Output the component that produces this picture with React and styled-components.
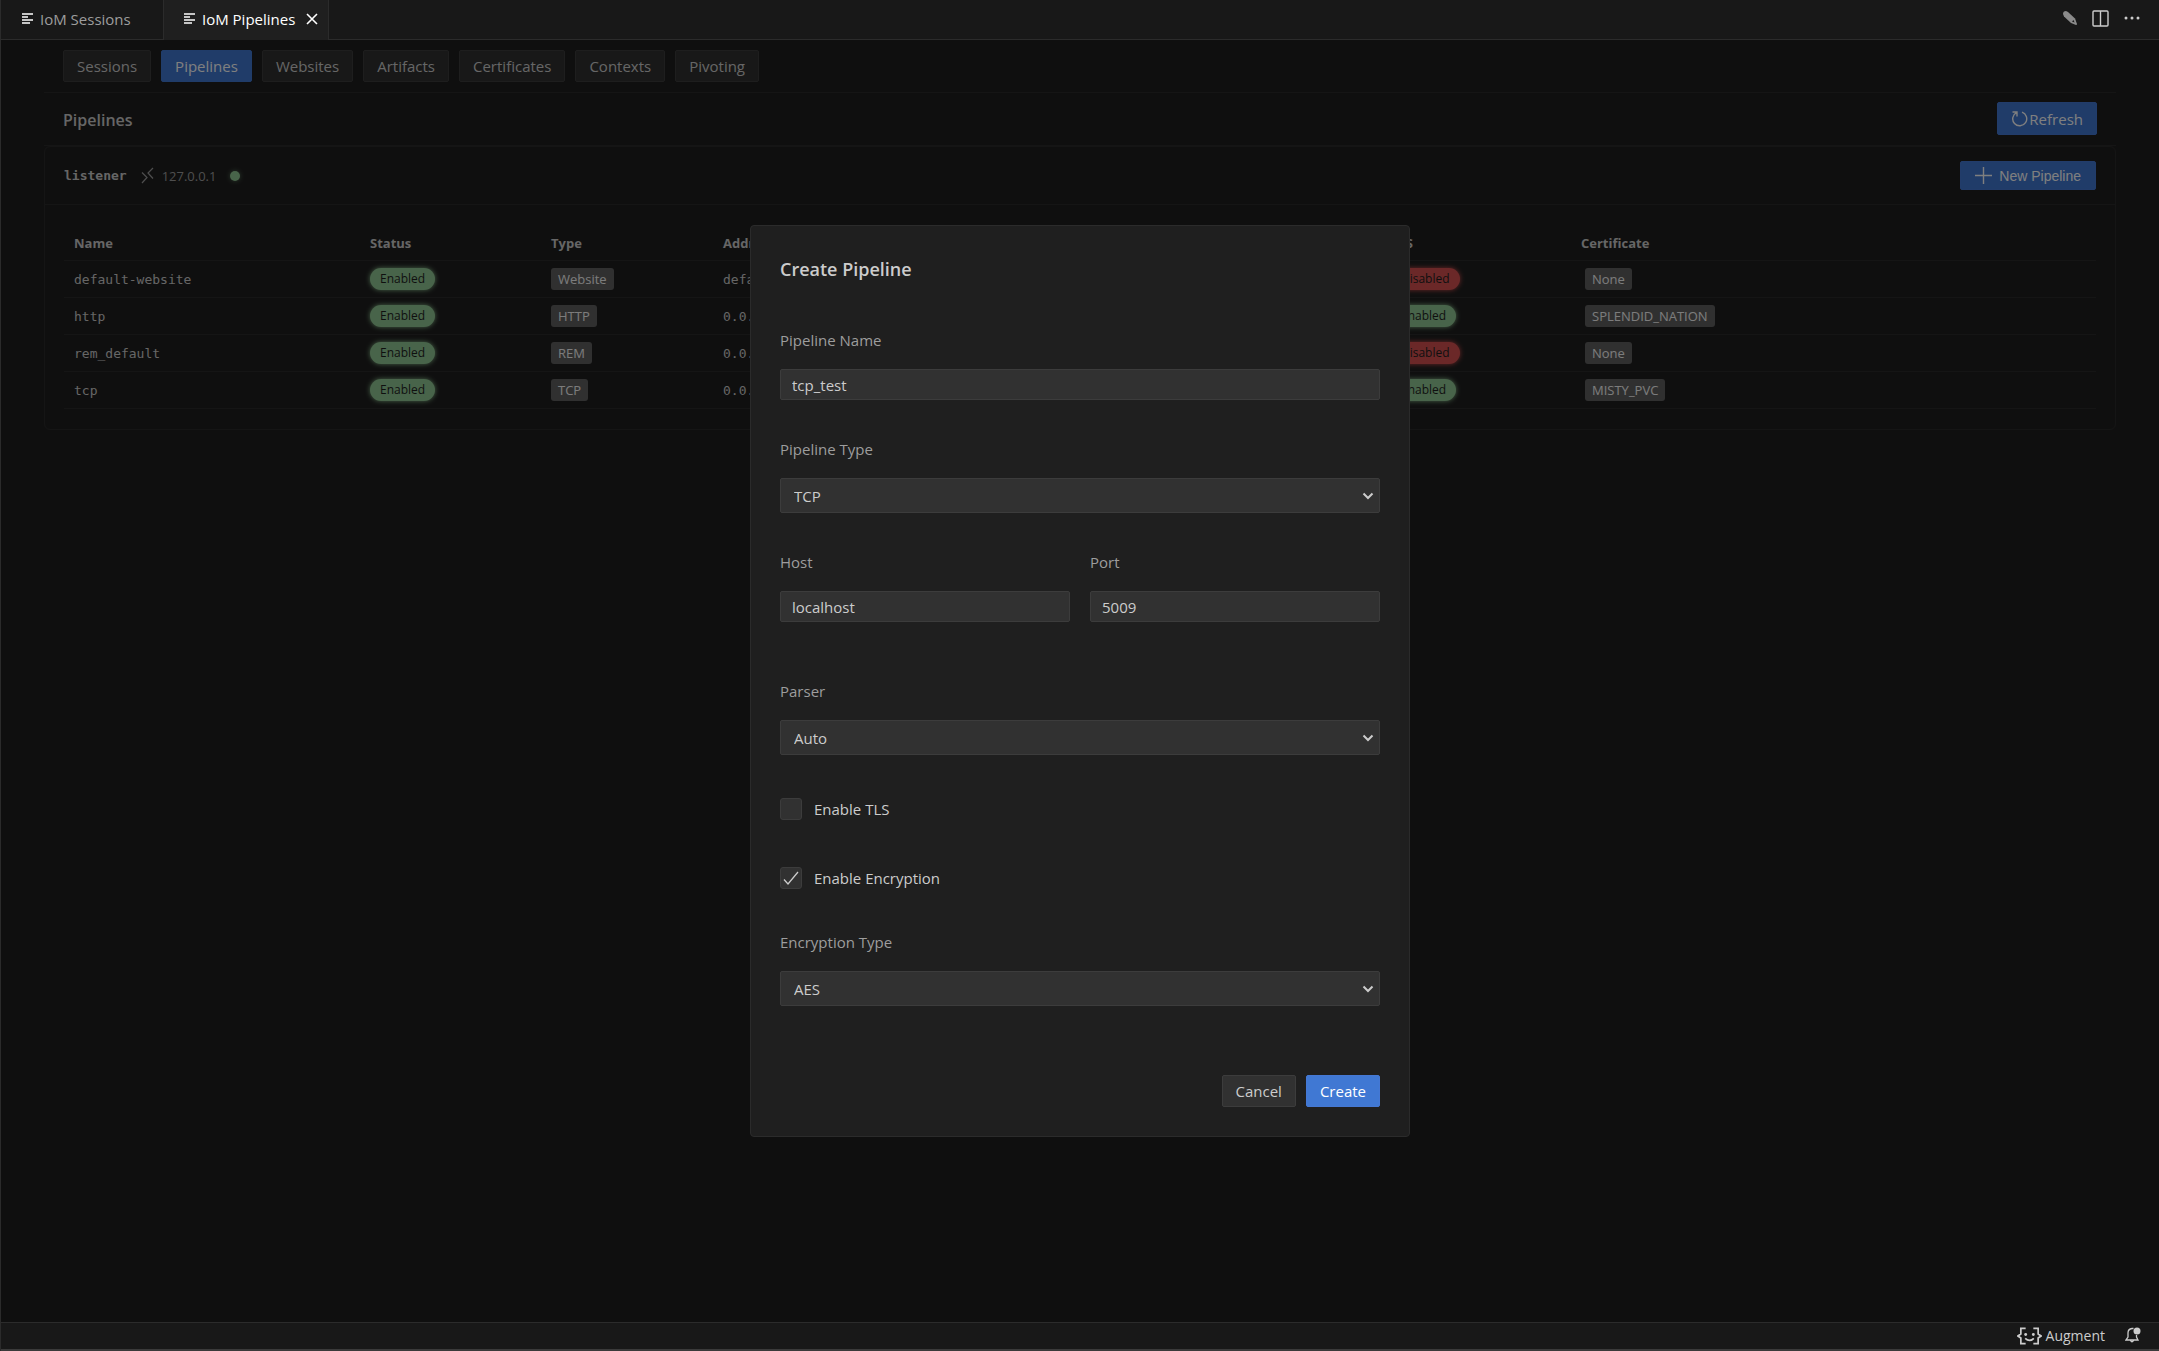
import React, { useState } from "react";
import styled, { createGlobalStyle } from "styled-components";

const SANS = '"Open Sans", "Noto Sans", sans-serif';
const MONO = '"DejaVu Sans Mono", "Liberation Mono", monospace';

const GlobalStyle = createGlobalStyle`
  *, *::before, *::after { box-sizing: border-box; }
  html, body, #root { height: 100%; }
  body {
    margin: 0;
    background: #1f1f1f;
    color: #cccccc;
    font-family: ${SANS};
    font-size: 15px;
    line-height: 20px;
  }
  button, input, select { font: inherit; color: inherit; margin: 0; }
`;

const Window = styled.div`
  display: flex;
  flex-direction: column;
  height: 100%;
  border-left: 1px solid #2b2b2b;
`;

/* Editor tabs */
const TabBar = styled.header`
  display: flex;
  justify-content: space-between;
  flex: none;
  height: 40px;
  background: #181818;
  box-shadow: inset 0 -1px 0 #2b2b2b;
`;

const Tabs = styled.div`
  display: flex;
`;

const Tab = styled.div`
  display: flex;
  align-items: center;
  gap: 7px;
  width: ${(p) => (p.$active ? 166 : 162)}px;
  padding: 0 10px 2px ${(p) => (p.$active ? 20 : 21)}px;
  color: ${(p) => (p.$active ? "#ffffff" : "#9d9d9d")};
  background: ${(p) => (p.$active ? "#1f1f1f" : "transparent")};
  border-left: ${(p) => (p.$active ? "1px solid #2b2b2b" : "0")};
  border-right: ${(p) => (p.$active ? "1px solid #2b2b2b" : "0")};
  white-space: nowrap;
`;

const IconButton = styled.button`
  display: inline-flex;
  align-items: center;
  justify-content: center;
  padding: 0;
  border: 0;
  background: none;
  color: ${(p) => p.$color || "#cccccc"};
`;

const CloseButton = styled(IconButton)`
  margin-left: auto;
`;

const TabActions = styled.div`
  display: flex;
  align-items: center;
  gap: 14px;
  padding: 0 18px 4px 0;
`;

/* Webview */
const Webview = styled.div`
  position: relative;
  flex: 1;
  min-height: 0;
  overflow: hidden;
`;

const Page = styled.main`
  padding: 0 43px;
`;

const Nav = styled.nav`
  display: flex;
  gap: 10px;
  padding: 10px 19px;
  border-bottom: 1px solid #2b2b2b;
`;

const Button = styled.button`
  display: inline-flex;
  align-items: center;
  justify-content: center;
  height: 32px;
  padding: 0 13px;
  border: 1px solid ${(p) => (p.$primary ? "#4578d4" : "#3c3c3c")};
  border-radius: 2px;
  background: ${(p) => (p.$primary ? "#4078d3" : "#313131")};
  color: ${(p) => (p.$primary ? "#ffffff" : "#cccccc")};
  white-space: nowrap;
`;

const NavButton = styled(Button)`
  border-color: ${(p) => (p.$primary ? "#4078d3" : "#3c3c3c")};
`;

const HeaderRow = styled.div`
  display: flex;
  align-items: center;
  justify-content: space-between;
  padding: 9px 19px 10px;
  border-bottom: 1px solid #2b2b2b;
`;

const PageTitle = styled.h1`
  margin: 0;
  padding-top: 2px;
  font-size: 16px;
  font-weight: 600;
  line-height: 24px;
`;

const RefreshButton = styled(Button)`
  height: 33px;
  gap: 1px;
`;

const Card = styled.section`
  border: 1px solid #2b2b2b;
  border-radius: 6px;
`;

const CardHeader = styled.div`
  display: flex;
  align-items: center;
  justify-content: space-between;
  padding: 14px 19px;
  border-bottom: 1px solid #2b2b2b;
`;

const Listener = styled.div`
  display: flex;
  align-items: center;
  gap: 14px;
`;

const ListenerName = styled.span`
  font: 700 13px/20px ${MONO};
`;

const Address = styled.span`
  display: inline-flex;
  align-items: center;
  gap: 8px;
  font-size: 13px;
  color: #9d9d9d;
`;

const Dot = styled.span`
  width: 10px;
  height: 10px;
  border-radius: 50%;
  background: #91c894;
  box-shadow: 0 0 5px #91c89480;
`;

const NewButton = styled(Button)`
  height: 29px;
  gap: 7px;
  padding: 0 14px;
  font: 14px/20px "Liberation Sans", Arial, sans-serif;
`;

const TableWrap = styled.div`
  padding: 20px 19px;
`;

const Table = styled.table`
  width: 100%;
  table-layout: fixed;
  border-collapse: collapse;
`;

const Col = styled.col`
  width: ${(p) => (p.$w ? p.$w + "px" : "auto")};
`;

const Th = styled.th`
  height: 35px;
  padding: 2px 10px 0;
  text-align: left;
  font-size: 13px;
  font-weight: 700;
  border-bottom: 1px solid #2b2b2b;
`;

const Td = styled.td`
  height: 37px;
  padding: ${(p) => (p.$mono ? 2 : 0)}px 10px 0;
  font-family: ${(p) => (p.$mono ? MONO : SANS)};
  font-size: 13px;
  line-height: 20px;
  border-bottom: 1px solid #2b2b2b;
`;

const Pill = styled.span`
  display: inline-block;
  padding: 0 10px;
  border-radius: 11px;
  font-size: 12px;
  line-height: 22px;
  color: #1f1f1f;
  background: ${(p) => (p.$on ? "#91c894" : "#d65151")};
  box-shadow: 0 0 5px ${(p) => (p.$on ? "#91c894" : "#d65151")};
`;

const Tag = styled.span`
  display: inline-block;
  margin-left: ${(p) => (p.$inset ? 4 : 0)}px;
  padding: 0 7px;
  border-radius: 3px;
  font-size: 13px;
  line-height: 22px;
  background: #616161;
  color: #f8f8f8;
`;

/* Dialog */
const Overlay = styled.div`
  position: absolute;
  inset: 0;
  display: flex;
  align-items: center;
  justify-content: center;
  background: rgba(0, 0, 0, 0.5);
`;

const Dialog = styled.form`
  width: 660px;
  max-width: 90%;
  padding: 29px;
  border: 1px solid #2b2b2b;
  border-radius: 4px;
  background: #1f1f1f;
`;

const DialogTitle = styled.h2`
  margin: 0 0 47px;
  font-size: 18px;
  font-weight: 600;
  line-height: 28px;
`;

const Field = styled.div`
  display: flex;
  flex-direction: column;
  gap: 19px;
  margin-bottom: 39px;
`;

const FieldRow = styled.div`
  display: grid;
  grid-template-columns: 1fr 1fr;
  gap: 20px;
  margin-bottom: 20px;
`;

const Label = styled.label`
  color: #9d9d9d;
`;

const TextInput = styled.input`
  width: 100%;
  height: 31px;
  padding: 0 11px;
  border: 1px solid #3c3c3c;
  border-radius: 2px;
  background: #313131;
`;

const SelectBox = styled.div`
  display: grid;
  align-items: center;
  grid-template-columns: 1fr 18px;
`;

const Select = styled.select`
  grid-area: 1 / 1 / 2 / 3;
  appearance: none;
  width: 100%;
  height: 35px;
  padding: 0 13px;
  border: 1px solid #3c3c3c;
  border-radius: 2px;
  background: #313131;
`;

const SelectArrow = styled.svg`
  grid-area: 1 / 2 / 2 / 3;
  pointer-events: none;
`;

const CheckRow = styled.label`
  display: flex;
  align-items: center;
  gap: 12px;
  height: 30px;
  margin-bottom: 39px;
`;

const CheckBox = styled.span`
  display: grid;
  width: 22px;
  height: 22px;
`;

const CheckInput = styled.input`
  grid-area: 1 / 1;
  appearance: none;
  width: 22px;
  height: 22px;
  border: 1px solid #3c3c3c;
  border-radius: 3px;
  background: #313131;
`;

const CheckMark = styled.svg`
  grid-area: 1 / 1;
  place-self: center;
  pointer-events: none;
`;

const Actions = styled.div`
  display: flex;
  justify-content: flex-end;
  gap: 10px;
  padding-top: 30px;
`;

/* Status bar */
const StatusBar = styled.footer`
  display: flex;
  align-items: center;
  justify-content: flex-end;
  gap: 20px;
  flex: none;
  height: 29px;
  padding: 0 18px 1px 0;
  border-top: 1px solid #2b2b2b;
  border-bottom: 2px solid #3a3a3a;
  background: #181818;
  font-size: 14px;
`;

const StatusItem = styled.button`
  display: inline-flex;
  align-items: center;
  gap: 4px;
  padding: 0;
  border: 0;
  background: none;
`;

const ListIcon = () => (
  <svg width="11" height="14" viewBox="0 0 11 14" fill="#c5c5c5" aria-hidden="true">
    <path d="M0 1h11v2H0zM0 4h6v2H0zM0 7h11v2H0zM0 10h8v2H0z" />
  </svg>
);

const CloseIcon = () => (
  <svg width="12" height="12" viewBox="0 0 12 12" stroke="currentColor" strokeWidth="1.6" aria-hidden="true">
    <path d="M1 1l10 10M11 1L1 11" />
  </svg>
);

const PencilIcon = () => (
  <svg width="16" height="16" viewBox="0 0 16 16" fill="currentColor" aria-hidden="true">
    <path d="M1 4Q1 1 4 1L6 2l7 6.500 2 5.500q0 1-1 1l-5-2L2 6.500z" />
    <path d="M11.500 10l-1.500 1.500 2.500 1z" fill="#181818" />
  </svg>
);

const SplitIcon = () => (
  <svg width="17" height="17" viewBox="0 0 17 17" fill="none" stroke="currentColor" strokeWidth="1.4" aria-hidden="true">
    <rect x="1" y="1" width="15" height="15" rx="1" />
    <path d="M8.5 1v15" />
  </svg>
);

const MoreIcon = () => (
  <svg width="18" height="16" viewBox="0 0 18 16" fill="currentColor" aria-hidden="true">
    <circle cx="3" cy="8" r="1.5" />
    <circle cx="9" cy="8" r="1.5" />
    <circle cx="15" cy="8" r="1.5" />
  </svg>
);

const RemoteIcon = () => (
  <svg width="13" height="17" viewBox="0 0 13 17" fill="none" stroke="currentColor" strokeWidth="1.2" aria-hidden="true">
    <path d="M1 5.500l5 5-5 5.500M12 1L7 6l5 5.500" />
  </svg>
);

const RefreshIcon = () => (
  <svg width="17" height="17" viewBox="0 0 17 17" fill="none" stroke="currentColor" strokeWidth="1.4" aria-hidden="true">
    <path d="M1.5 2H6v4.500M5.500 2.600A7 7 0 1 0 11 2.200" />
  </svg>
);

const PlusIcon = () => (
  <svg width="17" height="17" viewBox="0 0 17 17" stroke="currentColor" strokeWidth="1.4" aria-hidden="true">
    <path d="M8.500 0v17M0 8.500h17" />
  </svg>
);

const AugmentIcon = () => (
  <svg width="25" height="18" viewBox="0 0 26 18" fill="none" stroke="currentColor" strokeWidth="1.8" aria-hidden="true">
    <path d="M9 1H4v6L1 9l3 2v6h5M17 1h5v6l3 2-3 2v6h-5M8.500 11.500q4.500 4 9 0" />
    <circle cx="9" cy="7.500" r="1.500" fill="currentColor" stroke="none" />
    <circle cx="17" cy="7.500" r="1.500" fill="currentColor" stroke="none" />
  </svg>
);

const BellIcon = () => (
  <svg width="16" height="17" viewBox="0 0 16 17" fill="none" stroke="currentColor" strokeWidth="1.300" aria-hidden="true">
    <path d="M8.500 1.500H7Q3 2 3 6v4l-2 3h12l-1.500-3V8M5.500 13.500q1.500 2.500 3 0" />
    <circle cx="12" cy="4" r="3.500" fill="currentColor" stroke="none" />
  </svg>
);

const NAV = ["Sessions", "Pipelines", "Websites", "Artifacts", "Certificates", "Contexts", "Pivoting"];

const PIPELINES = [
  { name: "default-website", type: "Website", address: "default", tls: false, cert: "None" },
  { name: "http", type: "HTTP", address: "0.0.0.0", tls: true, cert: "SPLENDID_NATION" },
  { name: "rem_default", type: "REM", address: "0.0.0.0", tls: false, cert: "None" },
  { name: "tcp", type: "TCP", address: "0.0.0.0", tls: true, cert: "MISTY_PVC" },
];

const State = ({ on }) => <Pill $on={on}>{on ? "Enabled" : "Disabled"}</Pill>;

function SelectField({ id, label, options }) {
  return (
    <Field>
      <Label htmlFor={id}>{label}</Label>
      <SelectBox>
        <Select id={id} defaultValue={options[0]}>
          {options.map((o) => (
            <option key={o}>{o}</option>
          ))}
        </Select>
        <SelectArrow width="12" height="8" viewBox="0 0 12 8" fill="none" stroke="#cccccc" strokeWidth="2" aria-hidden="true">
          <path d="M1.500 1.500L6 6l4.500-4.500" />
        </SelectArrow>
      </SelectBox>
    </Field>
  );
}

function TextField({ id, label, value }) {
  return (
    <Field>
      <Label htmlFor={id}>{label}</Label>
      <TextInput id={id} type="text" defaultValue={value} />
    </Field>
  );
}

function CheckField({ label, initial }) {
  const [checked, setChecked] = useState(initial);
  return (
    <CheckRow>
      <CheckBox>
        <CheckInput type="checkbox" checked={checked} onChange={(e) => setChecked(e.target.checked)} />
        {checked && (
          <CheckMark width="16" height="16" viewBox="0 0 16 16" fill="none" stroke="#cccccc" strokeWidth="1.300" aria-hidden="true">
            <path d="M1 9.500l4 4.500L15 2" />
          </CheckMark>
        )}
      </CheckBox>
      {label}
    </CheckRow>
  );
}

export default function App() {
  return (
    <>
      <GlobalStyle />
      <Window>
        <TabBar>
          <Tabs>
            <Tab>
              <ListIcon />
              IoM Sessions
            </Tab>
            <Tab $active>
              <ListIcon />
              IoM Pipelines
              <CloseButton type="button" aria-label="Close tab" $color="#ffffff">
                <CloseIcon />
              </CloseButton>
            </Tab>
          </Tabs>
          <TabActions>
            <IconButton type="button" aria-label="Edit" $color="#8a8a8a"><PencilIcon /></IconButton>
            <IconButton type="button" aria-label="Split editor"><SplitIcon /></IconButton>
            <IconButton type="button" aria-label="More actions"><MoreIcon /></IconButton>
          </TabActions>
        </TabBar>

        <Webview>
          <Page>
            <Nav>
              {NAV.map((item) => (
                <NavButton key={item} type="button" $primary={item === "Pipelines"}>{item}</NavButton>
              ))}
            </Nav>
            <HeaderRow>
              <PageTitle>Pipelines</PageTitle>
              <RefreshButton type="button" $primary>
                <RefreshIcon />
                Refresh
              </RefreshButton>
            </HeaderRow>
            <Card>
              <CardHeader>
                <Listener>
                  <ListenerName>listener</ListenerName>
                  <Address>
                    <RemoteIcon />
                    127.0.0.1
                  </Address>
                  <Dot />
                </Listener>
                <NewButton type="button" $primary>
                  <PlusIcon />
                  New Pipeline
                </NewButton>
              </CardHeader>
              <TableWrap>
                <Table>
                  <colgroup>
                    <Col $w={296} />
                    <Col $w={181} />
                    <Col $w={172} />
                    <Col $w={668} />
                    <Col $w={190} />
                    <Col />
                  </colgroup>
                  <thead>
                    <tr>
                      <Th>Name</Th>
                      <Th>Status</Th>
                      <Th>Type</Th>
                      <Th>Address</Th>
                      <Th>TLS</Th>
                      <Th>Certificate</Th>
                    </tr>
                  </thead>
                  <tbody>
                    {PIPELINES.map((p) => (
                      <tr key={p.name}>
                        <Td $mono>{p.name}</Td>
                        <Td><State on /></Td>
                        <Td><Tag>{p.type}</Tag></Td>
                        <Td $mono>{p.address}</Td>
                        <Td><State on={p.tls} /></Td>
                        <Td><Tag $inset>{p.cert}</Tag></Td>
                      </tr>
                    ))}
                  </tbody>
                </Table>
              </TableWrap>
            </Card>
          </Page>

          <Overlay>
            <Dialog role="dialog" aria-labelledby="dialog-title" onSubmit={(e) => e.preventDefault()}>
              <DialogTitle id="dialog-title">Create Pipeline</DialogTitle>
              <TextField id="name" label="Pipeline Name" value="tcp_test" />
              <SelectField id="type" label="Pipeline Type" options={["TCP", "HTTP", "REM"]} />
              <FieldRow>
                <TextField id="host" label="Host" value="localhost" />
                <TextField id="port" label="Port" value="5009" />
              </FieldRow>
              <SelectField id="parser" label="Parser" options={["Auto"]} />
              <CheckField label="Enable TLS" initial={false} />
              <CheckField label="Enable Encryption" initial />
              <SelectField id="encryption" label="Encryption Type" options={["AES", "XOR"]} />
              <Actions>
                <Button type="button">Cancel</Button>
                <Button type="submit" $primary>Create</Button>
              </Actions>
            </Dialog>
          </Overlay>
        </Webview>

        <StatusBar>
          <StatusItem type="button">
            <AugmentIcon />
            Augment
          </StatusItem>
          <StatusItem type="button" aria-label="Notifications"><BellIcon /></StatusItem>
        </StatusBar>
      </Window>
    </>
  );
}
